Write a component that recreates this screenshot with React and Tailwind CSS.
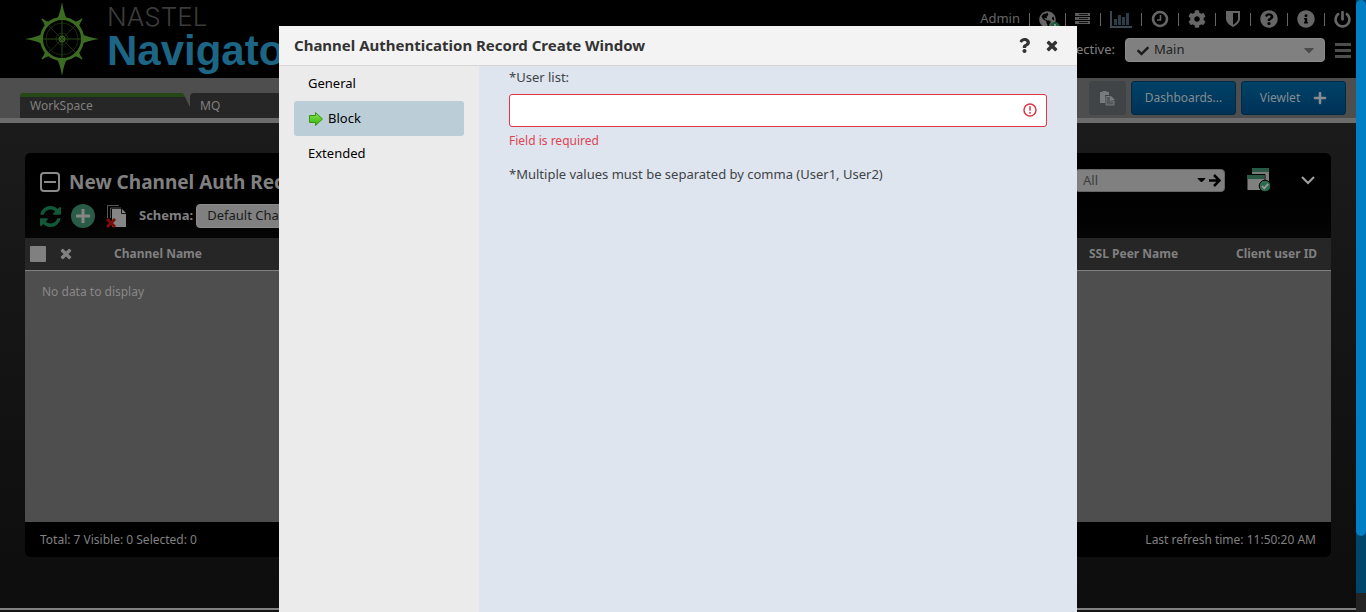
import React from "react";
import {
  FaCaretDown,
  FaCheck,
  FaCog,
  FaGlobeAmericas,
  FaInfoCircle,
  FaPlus,
  FaPowerOff,
  FaQuestion,
  FaQuestionCircle,
} from "react-icons/fa";

function CrossIcon({ className }) {
  return (
    <svg viewBox="220 220 1352 1352" className={className} fill="currentColor" aria-hidden="true">
      <path d="M1490 1322q0 40-28 68l-136 136q-28 28-68 28t-68-28l-294-294-294 294q-28 28-68 28t-68-28l-136-136q-28-28-28-68t28-68l294-294-294-294q-28-28-28-68t28-68l136-136q28-28 68-28t68 28l294 294 294-294q28-28 68-28t68 28l136 136q28 28 28 68t-28 68l-294 294 294 294q28 28 28 68z" transform="translate(0 -64)" />
    </svg>
  );
}

function CompassLogo() {
  return (
    <svg viewBox="0 0 74 74" className="h-[74px] w-[74px] shrink-0" aria-hidden="true">
      <g fill="#3c6b22">
        {[0, 90, 180, 270].map((a) => (
          <path key={a} d="M37 0 Q39 12 42 17 L32 17 Q35 12 37 0Z" transform={`rotate(${a} 37 37)`} />
        ))}
        {[45, 135, 225, 315].map((a) => (
          <path key={a} d="M37 8.500 Q37.500 13 40 17 L34 17 Q36.500 13 37 8.500Z" stroke="#3c6b22" transform={`rotate(${a} 37 37)`} />
        ))}
        <circle cx="37" cy="37" r="3.500" />
      </g>
      <circle cx="37" cy="37" r="20.500" fill="none" stroke="#3c6b22" strokeWidth="3" />
      <g fill="none" stroke="#172b0d" strokeWidth="1">
        <circle cx="37" cy="37" r="16" />
        <circle cx="37" cy="37" r="6" />
        <path d="M24 24l26 26M50 24L24 50" />
        <path d="M37 18v38M18 37h38" stroke="#2a4b18" />
      </g>
    </svg>
  );
}

function GlobeIcon() {
  return (
    <span className="relative block">
      <FaGlobeAmericas className="h-[17px] w-[17px]" />
      <svg viewBox="0 0 10 10" className="absolute -right-1 -bottom-1 h-[10px] w-[10px]">
        <circle cx="5" cy="5" r="5" fill="#1f5c3c" />
        <path d="M5 2v6M2 5h6" stroke="#a0a0a0" strokeWidth="1.500" />
      </svg>
    </span>
  );
}

function ServerIcon() {
  return (
    <svg viewBox="0 0 16 12" className="h-3 w-4" fill="#5c5c5c">
      <path d="M0 0h15v3H0zM0 4h15v3H0zM0 8h15v3H0z" />
      <path d="M4 1h9v1H4zM4 5h9v1H4zM4 9h9v1H4z" fill="#111" />
    </svg>
  );
}

function ChartIcon() {
  return (
    <svg viewBox="0 0 22 17" className="h-[17px] w-[22px]" fill="#2d3c49">
      <path d="M0 0h2v15h20v2H0z" fill="#3a4750" />
      <path d="M4 8h3v6H4zM8 4h3v10H8zM12 6h3v8h-3zM16 2h3v12h-3z" />
    </svg>
  );
}

function ClockIcon() {
  return (
    <svg viewBox="0 0 18 18" className="h-[18px] w-[18px]" fill="none" stroke="currentColor">
      <circle cx="9" cy="9" r="7" strokeWidth="2.600" />
      <path d="M9.500 5v5H6" strokeWidth="1.600" />
    </svg>
  );
}

function ShieldIcon() {
  return (
    <svg viewBox="0 0 14 16" className="h-4 w-4">
      <path d="M1 1h12v7c0 3-2.500 5-6 7-3.500-2-6-4-6-7z" fill="none" stroke="currentColor" strokeWidth="2" />
      <path d="M1 1h6v14C3.500 13 1 11 1 8z" fill="currentColor" />
    </svg>
  );
}

function PasteIcon() {
  return (
    <svg viewBox="0 0 15 15" className="h-[15px] w-[15px]">
      <path d="M0 1h2.500V0h4v1H9v3H5v8H0z" fill="#777b7d" />
      <path d="M6 5.500h4.500V10H14v4H6z" fill="#55595b" stroke="#777b7d" />
      <path d="M11 5l4 4h-4z" fill="#777b7d" />
    </svg>
  );
}

function RefreshIcon() {
  return (
    <svg viewBox="0 0 1536 1536" className="h-[21px] w-[21px]" fill="currentColor">
      <path d="M1511 928q0 5-1 7-64 268-268 434.500T764 1536q-146 0-282.500-55T238 1324l-129 129q-19 19-45 19t-45-19-19-45V960q0-26 19-45t45-19h448q26 0 45 19t19 45-19 45l-137 137q71 66 161 102t187 36q134 0 250-65t186-179q11-17 53-117 8-23 30-23h192q13 0 22.500 9.500t9.500 22.500zm25-800v448q0 26-19 45t-45 19h-448q-26 0-45-19t-19-45 19-45l138-138Q969 256 768 256q-134 0-250 65T332 500q-11 17-53 117-8 23-30 23H50q-13 0-22.500-9.500T18 608v-7q65-268 270-434.500T768 0q146 0 284 55.500T1297 212l130-129q19-19 45-19t45 19 19 45z" />
    </svg>
  );
}

function DeleteSchemaIcon() {
  return (
    <svg viewBox="0 0 21 24" className="h-6 w-[21px]" aria-hidden="true">
      <path d="M1.500 14V1.500H13M4.500 14V4H15" fill="none" stroke="#555" />
      <path d="M6 5h10l4 4v14H6z" fill="#868686" />
      <path d="M15.500 5v4.500H20" fill="none" stroke="#111" />
      <path d="M1 15l8 8M9 15l-8 8" stroke="#7d0d06" strokeWidth="3" />
    </svg>
  );
}

function WindowsIcon() {
  return (
    <svg viewBox="0 0 24 24" className="h-6 w-6" aria-hidden="true">
      <path d="M5 0h17v13H5z" fill="#7c7c7c" />
      <path d="M5 0h17v4H5z" fill="#2a5a45" />
      <path d="M0 6.500h18v16H0z" fill="#808080" stroke="#050505" />
      <path d="M0 7h17v4H0z" fill="#2a5a45" />
      <circle cx="18" cy="18" r="5.800" fill="#2a6a4d" stroke="#050505" />
      <path d="M15 18l2.200 2.300 4-4.500" fill="none" stroke="#999" strokeWidth="1.800" />
    </svg>
  );
}

function GreenArrow() {
  return (
    <svg viewBox="0 0 16 16" className="h-4 w-4" aria-hidden="true">
      <defs>
        <linearGradient id="arrowFill" x1="0" y1="0" x2="0" y2="1">
          <stop offset="0" stopColor="#8be04f" />
          <stop offset="1" stopColor="#2fb80a" />
        </linearGradient>
      </defs>
      <path d="M1.500 4.500h6v-3l7 6.500-7 6.500v-3h-6z" fill="url(#arrowFill)" stroke="#379414" />
    </svg>
  );
}

const tools = [
  { label: "Servers", icon: <ServerIcon /> },
  { label: "Charts", icon: <ChartIcon /> },
  { label: "History", icon: <ClockIcon /> },
  { label: "Settings", icon: <FaCog className="h-[18px] w-[18px]" /> },
  { label: "Security", icon: <ShieldIcon /> },
  { label: "Help", icon: <FaQuestionCircle className="h-[18px] w-[18px]" /> },
  { label: "About", icon: <FaInfoCircle className="h-[18px] w-[18px]" /> },
  { label: "Log out", icon: <FaPowerOff className="h-[17px] w-[17px]" /> },
];

function Header() {
  return (
    <header className="flex h-[78px] shrink-0 justify-between bg-black pl-[25px]">
      <div className="flex items-start gap-2 pt-[2px]">
        <CompassLogo />
        <div className="font-['Liberation_Sans',sans-serif]">
          <div className="font-['Inter',sans-serif] text-[26px] leading-[30px] font-light text-[#3b3b3b]">NASTEL</div>
          <div className="text-[42px] leading-[38px] font-bold text-[#1c6585]">Navigator</div>
        </div>
      </div>
      <div className="flex flex-col items-end gap-2 pt-2 pr-[5px]">
        <div className="flex h-[22px] items-center gap-[9px] text-[#666]">
          <span className="text-[13px]">Admin</span>
          <span className="h-[13px] w-px bg-[#666]" />
          <button type="button" aria-label="Add connection">
            <GlobeIcon />
          </button>
          {tools.map((tool) => (
            <React.Fragment key={tool.label}>
              <span className="h-[13px] w-px bg-[#666]" />
              <button type="button" aria-label={tool.label}>
                {tool.icon}
              </button>
            </React.Fragment>
          ))}
        </div>
        <div className="flex items-center gap-[10px]">
          <label htmlFor="perspective" className="text-[13px] text-[#808080]">
            Perspective:
          </label>
          <div className="relative text-[#1b1b1b]">
            <select
              id="perspective"
              className="block h-6 w-[200px] appearance-none rounded border border-[#8b8b8b] bg-[#808080] pl-[28px] text-[13px] text-[#1f1f1f]"
            >
              <option>Main</option>
            </select>
            <FaCheck className="pointer-events-none absolute top-[7px] left-3 h-3 w-3" />
            <FaCaretDown className="pointer-events-none absolute top-1 right-2 h-4 w-4 text-[#4a4a4a]" />
          </div>
          <button type="button" aria-label="Menu" className="flex w-4 flex-col gap-[3px]">
            <span className="h-[3px] w-full bg-[#4d4d4d]" />
            <span className="h-[3px] w-full bg-[#4d4d4d]" />
            <span className="h-[3px] w-full bg-[#4d4d4d]" />
          </button>
        </div>
      </div>
    </header>
  );
}

function TabBar() {
  return (
    <nav className="flex h-[45px] shrink-0 items-start justify-between border-b-[5px] border-[#6c6c6c] bg-[#4e4e4e] pr-[10px] pl-5 text-[12px]">
      <div className="flex pt-[15px] text-[#808080]">
        <button
          type="button"
          className="h-[25px] w-[170px] rounded-tl-[3px] bg-linear-to-b from-[#264716] from-[4px] to-[#262626] to-[4px] pl-[10px] text-left [clip-path:polygon(0_0,163px_0,100%_14px,100%_100%,0_100%)]"
        >
          WorkSpace
        </button>
        <button type="button" className="h-[25px] w-[170px] rounded-tl bg-[#262626] pl-[10px] text-left">
          MQ
        </button>
      </div>
      <div className="flex gap-[5px] pt-[3px] text-[#858c92]">
        <button
          type="button"
          aria-label="Paste"
          className="flex h-[34px] w-[37px] items-center justify-center rounded-[3px] bg-[#414446]"
        >
          <PasteIcon />
        </button>
        <button
          type="button"
          className="h-[34px] w-[105px] rounded-[3px] border border-[#002b48] bg-linear-to-b from-[#004267] to-[#003257]"
        >
          Dashboards...
        </button>
        <button
          type="button"
          className="flex h-[34px] w-[105px] items-center justify-center gap-[13px] rounded-[3px] border border-[#002b48] bg-linear-to-b from-[#004267] to-[#003257]"
        >
          Viewlet
          <FaPlus className="h-[14px] w-[14px]" />
        </button>
      </div>
    </nav>
  );
}

function Viewlet() {
  return (
    <section className="flex grow flex-col overflow-hidden rounded-md bg-black text-[12px]">
      <div className="flex h-[85px] shrink-0 justify-between bg-linear-to-b from-black to-[#050505] text-[13px]">
        <div className="flex flex-col gap-1 pt-4 pl-[15px]">
          <div className="flex h-[26px] items-center gap-[9px]">
            <button type="button" aria-label="Collapse">
              <svg viewBox="0 0 20 20" className="h-5 w-5" fill="none" stroke="#8b8b8b" strokeWidth="2">
                <rect x="1" y="1" width="18" height="18" rx="3" />
                <path d="M4 10h12" />
              </svg>
            </button>
            <h1 className="text-[19px] font-bold whitespace-nowrap text-[#808080]">New Channel Auth Records</h1>
          </div>
          <div className="flex h-[34px] items-center">
            <button type="button" aria-label="Refresh" className="text-[#12593a]">
              <RefreshIcon />
            </button>
            <button type="button" aria-label="Add" className="ml-[10px]">
              <svg viewBox="0 0 24 24" className="h-6 w-6">
                <circle cx="12" cy="12" r="12" fill="#2a5b46" />
                <path d="M12 5v14M5 12h14" stroke="#868686" strokeWidth="3" />
              </svg>
            </button>
            <button type="button" aria-label="Delete schema" className="ml-[11px]">
              <DeleteSchemaIcon />
            </button>
            <label htmlFor="schema" className="ml-3 font-bold text-[#808080]">
              Schema:
            </label>
            <select
              id="schema"
              className="ml-[3px] h-6 w-[200px] appearance-none rounded border border-[#8b8b8b] bg-[#808080] pl-[10px] text-[13px] text-[#1b1b1b]"
            >
              <option>Default Channel Auth</option>
            </select>
          </div>
        </div>
        <div className="flex h-[54px] items-center pr-4">
          <div className="relative">
            <input
              aria-label="Search"
              placeholder="All"
              className="block h-[23px] w-[150px] rounded border border-[#666] bg-[#808080] pl-[7px] text-[13px] placeholder:text-[#3d3d3d]"
            />
            <button type="button" aria-label="Run search" className="absolute top-[5px] right-1">
              <svg viewBox="0 0 24 13" className="h-[13px] w-6" fill="#000" stroke="#000">
                <path d="M1 4.500h7L4.500 8z" />
                <path d="M12 6.500h10M17 1l5.500 5.500L17 12" fill="none" strokeWidth="2.500" />
              </svg>
            </button>
          </div>
          <button type="button" aria-label="Schemas" className="ml-[22px]">
            <WindowsIcon />
          </button>
          <button type="button" aria-label="More" className="ml-[30px]">
            <svg viewBox="0 0 14 9" className="h-[9px] w-[14px]" fill="none" stroke="#a0a0a0" strokeWidth="2">
              <path d="M1 1l6 6 6-6" />
            </svg>
          </button>
        </div>
      </div>
      <div className="grow bg-[#4e4e4e]">
        <table className="w-full table-fixed border-collapse text-left">
          <thead>
            <tr className="h-8 border-b border-[#808080] bg-[#262626] text-[#808080]">
              <th className="w-7 pl-[5px]">
                <input
                  type="checkbox"
                  aria-label="Select all"
                  className="block h-4 w-4 appearance-none rounded-[1px] bg-[#808080]"
                />
              </th>
              <th className="w-[61px] pl-[7px]">
                <CrossIcon className="h-3 w-3" />
              </th>
              <th>Channel Name</th>
              <th className="w-[147px]">SSL Peer Name</th>
              <th className="w-[95px]">Client user ID</th>
            </tr>
          </thead>
          <tbody>
            <tr className="h-[43px] text-[#888]">
              <td colSpan={5} className="pl-[17px]">
                No data to display
              </td>
            </tr>
          </tbody>
        </table>
      </div>
      <footer className="flex h-[35px] shrink-0 items-center justify-between px-[15px] text-[#808080]">
        <span>Total: 7 Visible: 0 Selected: 0</span>
        <span>Last refresh time: 11:50:20 AM</span>
      </footer>
    </section>
  );
}

function CreateDialog() {
  return (
    <div
      role="dialog"
      aria-labelledby="dialog-title"
      className="absolute inset-x-0 top-[26px] bottom-0 mx-auto flex max-w-[798px] flex-col bg-[#ebebeb] text-[13px]"
    >
      <div className="flex h-10 shrink-0 items-center justify-between border-b border-[#d6d6d6] bg-[#f3f3f3] pr-[19px] pl-[15px] text-[#333]">
        <h2 id="dialog-title" className="text-[15px] font-bold">
          Channel Authentication Record Create Window
        </h2>
        <div className="flex items-center gap-[14px]">
          <button type="button" aria-label="Help">
            <FaQuestion className="h-[15px] w-[15px]" />
          </button>
          <button type="button" aria-label="Close">
            <CrossIcon className="h-3 w-3" />
          </button>
        </div>
      </div>
      <div className="flex grow">
        <nav className="flex w-[200px] shrink-0 flex-col px-[15px] leading-[21px] text-black">
          <button type="button" className="h-[35px] pl-[14px] text-left">
            General
          </button>
          <button type="button" className="flex h-[35px] items-center gap-1 rounded-[3px] bg-[#bbced7] pl-[14px]">
            <GreenArrow />
            Block
          </button>
          <button type="button" className="h-[35px] pl-[14px] text-left">
            Extended
          </button>
        </nav>
        <form className="min-w-0 grow bg-[#dfe5ee] px-[30px] text-[#404347]">
          <label htmlFor="users" className="block h-7 leading-[22px]">
            *User list:
          </label>
          <div className="relative">
            <input
              id="users"
              type="text"
              aria-invalid="true"
              aria-describedby="users-error"
              className="block h-[33px] w-full rounded-[3px] border border-[#dc3545] bg-white px-3 outline-none"
            />
            <svg
              viewBox="0 0 14 14"
              className="absolute top-[9px] right-[10px] h-[14px] w-[14px]"
              fill="none"
              stroke="#dc3545"
              strokeWidth="1.500"
            >
              <circle cx="7" cy="7" r="6" />
              <path d="M7 3.300v4.400M7 9v1.700" />
            </svg>
          </div>
          <p id="users-error" className="pt-[3px] text-[12px] leading-[22px] text-[#dc4455]">
            Field is required
          </p>
          <p className="pt-[11px] leading-[22px]">*Multiple values must be separated by comma (User1, User2)</p>
        </form>
      </div>
    </div>
  );
}

export default function App() {
  return (
    <div className="relative flex min-h-screen bg-black font-['Noto_Sans','Open_Sans',sans-serif]">
      <div className="relative flex min-w-0 grow flex-col bg-[#0d0d0d]">
        <Header />
        <TabBar />
        <main className="flex grow flex-col bg-linear-to-b from-[#1b1b1b] to-[#0d0d0d] px-[25px] pt-[30px] pb-[51px]">
          <Viewlet />
        </main>
        <div className="h-1 shrink-0 border-t-2 border-[#808080] bg-[#151515]" />
        <CreateDialog />
      </div>
      <div className="flex w-[10px] shrink-0 flex-col bg-[#242424]">
        <div className="grow bg-[#00456a]">
          <div className="h-[536px] rounded-full bg-[#007fc5]" />
        </div>
        <div className="h-[19px]" />
      </div>
    </div>
  );
}
